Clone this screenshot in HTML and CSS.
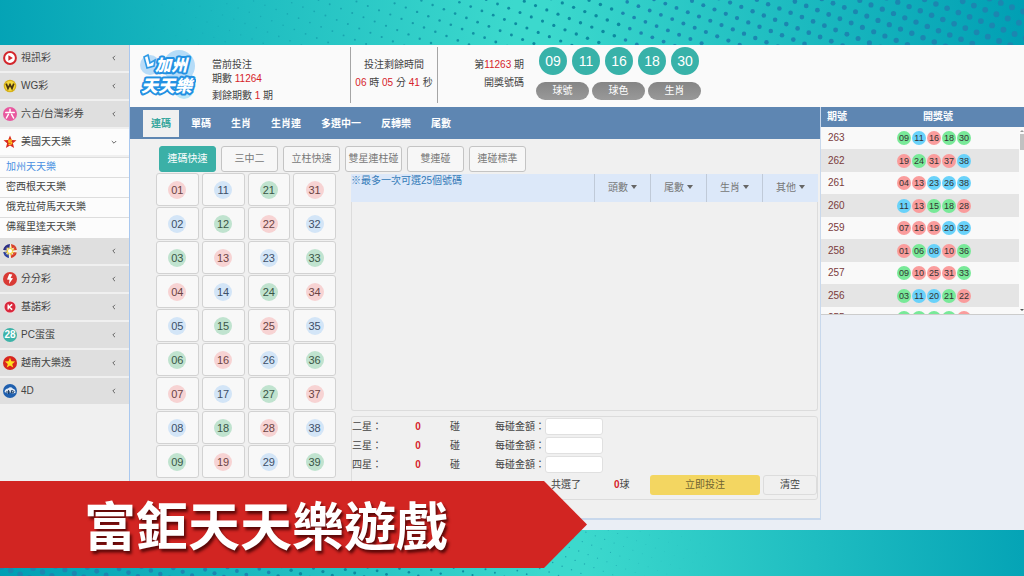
FILE: index.html
```html
<!DOCTYPE html>
<html lang="zh-Hant">
<head>
<meta charset="utf-8">
<meta name="viewport" content="width=device-width, initial-scale=1">
<title>富鉅天天樂遊戲</title>
<link rel="stylesheet" href="styles.css">
</head>
<body>
<div class="stage">
<svg class="dots" id="dots" viewBox="0 0 1024 576" preserveAspectRatio="none" aria-hidden="true"></svg>
<div class="app">
  <nav class="sidebar" aria-label="彩種">
    <button class="menu"><svg class="icon" viewBox="0 0 14 14"><circle cx="7" cy="7" r="5.9" fill="#fff" stroke="#d3262c" stroke-width="2"/><path d="M5.4 4.2 9.8 7 5.4 9.8z" fill="#d3262c"/></svg><span>視訊彩</span><svg class="chev" viewBox="0 0 6 6"><path d="M4 .8 1.8 3 4 5.2"/></svg></button>
    <button class="menu"><svg class="icon" viewBox="0 0 14 14"><circle cx="7" cy="7" r="6.3" fill="#d8b21c"/><circle cx="7" cy="7" r="5" fill="#f4d93c"/><path d="M3.2 4.6 5 9.4 7 5.6 9 9.4 10.8 4.6" fill="none" stroke="#4a3510" stroke-width="1.7"/></svg><span>WG彩</span><svg class="chev" viewBox="0 0 6 6"><path d="M4 .8 1.8 3 4 5.2"/></svg></button>
    <button class="menu"><svg class="icon" viewBox="0 0 14 14"><circle cx="7" cy="7" r="7" fill="#e8589f"/><path d="M7 2.2V4.6M2.8 5.5H11.2M5.4 7.4 3.4 11M8.6 7.4 10.6 11" fill="none" stroke="#fff" stroke-width="1.5" stroke-linecap="round"/></svg><span>六合/台灣彩券</span><svg class="chev" viewBox="0 0 6 6"><path d="M4 .8 1.8 3 4 5.2"/></svg></button>
    <button class="menu menu-open"><svg class="icon" viewBox="0 0 14 14"><path d="M7 .6 8.8 4.9 13.5 5.2 9.9 8.2 11.1 12.9 7 10.4 2.9 12.9 4.1 8.2.5 5.2 5.2 4.9z" fill="#d8281f"/><path d="M9 5.1H5.9V7H7.7Q9 7.2 8.8 8.4 8.5 9.5 5.5 9.2" fill="none" stroke="#ffd21f" stroke-width="1.3"/></svg><span>美國天天樂</span><svg class="chev" viewBox="0 0 6 6"><path d="M.8 2 3 4.2 5.2 2"/></svg></button>
    <div class="submenu">
      <a class="sub sub-active" href="#">加州天天樂</a>
      <a class="sub" href="#">密西根天天樂</a>
      <a class="sub" href="#">俄克拉荷馬天天樂</a>
      <a class="sub" href="#">佛羅里達天天樂</a>
    </div>
    <button class="menu"><svg class="icon" viewBox="0 0 14 14"><circle cx="7" cy="7" r="7" fill="#f4f0e0"/><path d="M7 0A7 7 0 0 0 .1 6L4.5 6.5 3.2 3.5 6.2 5z" fill="#2a2d86"/><path d="M.2 8A7 7 0 0 0 6 13.9L5.6 9.4 2.6 10.6 4.6 7.6z" fill="#2b3fa0"/><path d="M8 13.9A7 7 0 0 0 13.8 8.4L9.4 8 10.4 11 7.6 9.4z" fill="#d63a2c"/><path d="M13.9 6A7 7 0 0 0 8 .1L8.6 4.6 11.4 3.4 9.4 6.4z" fill="#d8402c"/><path d="M2 4.5 5 6 4.5 2.8 7 5 8.6 2 8.8 5.4 12 4.8 9.4 7.2 12 9.4 8.8 8.8 8.6 12 6.6 9.2 4.2 11.6 4.8 8.4 1.6 8.4 4.4 6.8z" fill="#f2d335"/><circle cx="7" cy="7" r="2" fill="#fff"/></svg><span>菲律賓樂透</span><svg class="chev" viewBox="0 0 6 6"><path d="M4 .8 1.8 3 4 5.2"/></svg></button>
    <button class="menu"><svg class="icon" viewBox="0 0 14 14"><circle cx="7" cy="7" r="7" fill="#d93a35"/><path d="M6.2 2 4 7.4 6.5 7.7 6 12 10 6.3 7.6 6 9.3 2.4z" fill="#fff"/></svg><span>分分彩</span><svg class="chev" viewBox="0 0 6 6"><path d="M4 .8 1.8 3 4 5.2"/></svg></button>
    <button class="menu"><svg class="icon" viewBox="0 0 14 14"><circle cx="7" cy="7" r="6.5" fill="#f3d9dc"/><circle cx="7" cy="7" r="5.5" fill="#d9283c"/><path d="M5.2 4.4V9.6M9.2 4.4 6 7 9.2 9.6" fill="none" stroke="#fff" stroke-width="1.4"/></svg><span>基諾彩</span><svg class="chev" viewBox="0 0 6 6"><path d="M4 .8 1.8 3 4 5.2"/></svg></button>
    <button class="menu"><span class="icon icon-28">28</span><span>PC蛋蛋</span><svg class="chev" viewBox="0 0 6 6"><path d="M4 .8 1.8 3 4 5.2"/></svg></button>
    <button class="menu"><svg class="icon" viewBox="0 0 14 14"><circle cx="7" cy="7" r="7" fill="#d8261f"/><path d="M7 1.8 8.4 5.3 12.1 5.5 9.2 7.9 10.2 11.5 7 9.5 3.8 11.5 4.8 7.9 1.9 5.5 5.6 5.3z" fill="#ffe11f"/></svg><span>越南大樂透</span><svg class="chev" viewBox="0 0 6 6"><path d="M4 .8 1.8 3 4 5.2"/></svg></button>
    <button class="menu"><svg class="icon" viewBox="0 0 14 14"><circle cx="7" cy="7" r="7" fill="#1f5fae"/><path d="M1.5 8Q2 4.5 5 4.5 7.5 2 10 4.8 13 5.5 12.4 9L9 9.6 7 8.2 5 9.6z" fill="#dfe9f4"/><path d="M3 8H7M5.6 6V10M8.4 6.6V9Q11 9 11 7.8 11 6.6 8.4 6.6" fill="none" stroke="#16375f" stroke-width="1"/></svg><span>4D</span><svg class="chev" viewBox="0 0 6 6"><path d="M4 .8 1.8 3 4 5.2"/></svg></button>
  </nav>

  <div class="content">
    <header class="topbar">
      <svg class="logo" viewBox="0 0 56 52" role="img" aria-label="加州天天樂">
        <circle cx="10" cy="16" r="10" fill="#b9dcf8"/><circle cx="39" cy="17" r="16" fill="#b5dcf8"/><circle cx="44" cy="40" r="10" fill="#b9e6f8"/><circle cx="44" cy="40" r="6" fill="#e4f5fc"/>
        <path d="M4 8 8 6 10 14 15 11 14 17 7 19z" fill="#fff" stroke="#2f9be6" stroke-width="1.6"/>
        <text class="logo-text" x="15" y="22" font-size="16">加州</text>
        <text class="logo-text" x="1" y="43" font-size="17">天天樂</text>
      </svg>
      <div class="issue"><p>當前投注</p><p>期數 <em>11264</em></p><p class="issue-left">剩餘期數 <em>1</em> 期</p></div>
      <div class="timer"><p>投注剩餘時間</p><p><em>06</em> 時 <em>05</em> 分 <em>41</em> 秒</p></div>
      <div class="last"><p>第<em>11263</em> 期</p><p>開獎號碼</p></div>
      <div class="result">
        <div class="result-balls"><span>09</span><span>11</span><span>16</span><span>18</span><span>30</span></div>
        <div class="result-tabs"><button>球號</button><button>球色</button><button>生肖</button></div>
      </div>
    </header>

    <div class="columns">
      <main class="play">
        <nav class="tabs" aria-label="玩法">
          <a class="tab tab-active" href="#">連碼</a><a class="tab" href="#">單碼</a><a class="tab" href="#">生肖</a><a class="tab" href="#">生肖連</a><a class="tab" href="#">多選中一</a><a class="tab" href="#">反轉樂</a><a class="tab" href="#">尾數</a>
        </nav>
        <div class="modes">
          <button class="mode mode-active">連碼快速</button><button class="mode">三中二</button><button class="mode">立柱快速</button><button class="mode">雙星連柱碰</button><button class="mode">雙連碰</button><button class="mode">連碰標準</button>
        </div>
        <div class="board">
          <div class="numbers">
            <button class="cell r"><span>01</span></button><button class="cell b"><span>11</span></button><button class="cell g"><span>21</span></button><button class="cell r"><span>31</span></button>
            <button class="cell b"><span>02</span></button><button class="cell g"><span>12</span></button><button class="cell r"><span>22</span></button><button class="cell b"><span>32</span></button>
            <button class="cell g"><span>03</span></button><button class="cell r"><span>13</span></button><button class="cell b"><span>23</span></button><button class="cell g"><span>33</span></button>
            <button class="cell r"><span>04</span></button><button class="cell b"><span>14</span></button><button class="cell g"><span>24</span></button><button class="cell r"><span>34</span></button>
            <button class="cell b"><span>05</span></button><button class="cell g"><span>15</span></button><button class="cell r"><span>25</span></button><button class="cell b"><span>35</span></button>
            <button class="cell g"><span>06</span></button><button class="cell r"><span>16</span></button><button class="cell b"><span>26</span></button><button class="cell g"><span>36</span></button>
            <button class="cell r"><span>07</span></button><button class="cell b"><span>17</span></button><button class="cell g"><span>27</span></button><button class="cell r"><span>37</span></button>
            <button class="cell b"><span>08</span></button><button class="cell g"><span>18</span></button><button class="cell r"><span>28</span></button><button class="cell b"><span>38</span></button>
            <button class="cell g"><span>09</span></button><button class="cell r"><span>19</span></button><button class="cell b"><span>29</span></button><button class="cell g"><span>39</span></button>
          </div>
          <div class="slip">
            <div class="filters">
              <p class="hint">※最多一次可選25個號碼</p>
              <button class="filter">頭數</button><button class="filter">尾數</button><button class="filter">生肖</button><button class="filter">其他</button>
            </div>
            <div class="picked"></div>
            <form class="bet">
              <div class="bet-row"><span>二星：</span><b>0</b><span>碰</span><label for="star2">每碰金額：</label><input id="star2" type="text"></div>
              <div class="bet-row"><span>三星：</span><b>0</b><span>碰</span><label for="star3">每碰金額：</label><input id="star3" type="text"></div>
              <div class="bet-row"><span>四星：</span><b>0</b><span>碰</span><label for="star4">每碰金額：</label><input id="star4" type="text"></div>
              <div class="bet-foot"><span class="total">共選了</span><span class="count"><b>0</b>球</span><button class="submit" type="button">立即投注</button><button class="clear" type="reset">清空</button></div>
            </form>
          </div>
        </div>
      </main>

      <aside class="history">
        <div class="history-head"><span>期號</span><span>開獎號</span></div>
        <div class="history-body">
          <table class="draws">
            <tr><th scope="row">263</th><td><i class="g">09</i><i class="b">11</i><i class="r">16</i><i class="g">18</i><i class="g">30</i></td></tr>
            <tr><th scope="row">262</th><td><i class="r">19</i><i class="g">24</i><i class="r">31</i><i class="r">37</i><i class="b">38</i></td></tr>
            <tr><th scope="row">261</th><td><i class="r">04</i><i class="r">13</i><i class="b">23</i><i class="b">26</i><i class="b">38</i></td></tr>
            <tr><th scope="row">260</th><td><i class="b">11</i><i class="r">13</i><i class="g">15</i><i class="g">18</i><i class="r">28</i></td></tr>
            <tr><th scope="row">259</th><td><i class="r">07</i><i class="r">16</i><i class="r">19</i><i class="b">20</i><i class="b">32</i></td></tr>
            <tr><th scope="row">258</th><td><i class="r">01</i><i class="g">06</i><i class="b">08</i><i class="r">10</i><i class="g">36</i></td></tr>
            <tr><th scope="row">257</th><td><i class="g">09</i><i class="r">10</i><i class="r">25</i><i class="r">31</i><i class="g">33</i></td></tr>
            <tr><th scope="row">256</th><td><i class="g">03</i><i class="b">11</i><i class="b">20</i><i class="g">21</i><i class="r">22</i></td></tr>
            <tr><th scope="row">255</th><td><i class="g">11</i><i class="g">11</i><i class="g">15</i><i class="g">21</i><i class="r">24</i></td></tr>
          </table>
          <div class="scroll"><span class="up"></span><span class="thumb"></span><span class="down"></span></div>
        </div>
      </aside>
    </div>
  </div>
</div>
<div class="banner"><h1>富鉅天天樂遊戲</h1></div>
</div>
<script src="dots.js"></script>
</body>
</html>
```
FILE: styles.css
```css
* { box-sizing: border-box; }
body, p, h1 { margin: 0; }
body, button, input {
  font-family: "Liberation Sans", "Noto Sans CJK TC", sans-serif;
  font-size: 10px;
  line-height: 14px;
  color: #444;
}
button { padding: 0; border: 0; background: none; }
a { text-decoration: none; }
em, b { font-style: normal; color: #d6232b; }

.stage {
  position: relative;
  display: grid;
  grid-template-rows: 45px minmax(0, 1fr) 46px;
  height: 100vh;
  overflow: hidden;
  background: linear-gradient(86deg, #009fb4 0%, #3cd9cd 52%, #3cd9cd 55%, #009fb4 100%);
}
.dots { position: absolute; inset: 0; width: 100%; height: 100%; }
.app {
  position: relative;
  grid-row: 2;
  display: grid;
  grid-template-columns: 130px minmax(0, 1fr);
  overflow: hidden;
  background: #eaeef5;
}

/* Sidebar */
.sidebar { background: #f0f0f0; border-right: 1px solid #a9c8ef; }
.menu {
  display: flex;
  align-items: center;
  gap: 4px;
  width: 100%;
  height: 28px;
  padding: 0 12px 0 3px;
  background: #dfdfdf;
  border-bottom: 2px solid #f0f0f0;
}
.menu-open { background: #fcfcfc; }
.icon { width: 14px; height: 14px; flex: none; }
.icon-28 {
  border-radius: 50%;
  background: #3db3a8;
  color: #fff;
  font-weight: bold;
}
.chev { width: 6px; height: 6px; margin-left: auto; fill: none; stroke: #666; stroke-width: 1; }
.submenu { padding-bottom: 1px; background: #fcfcfc; }
.sub {
  display: block;
  height: 20px;
  padding-left: 6px;
  line-height: 18px;
  border-top: 1px solid #ddd;
  color: #444;
}
.sub-active { color: #4a90e2; }

/* Header */
.content { display: flex; flex-direction: column; min-width: 0; }
.topbar { display: flex; height: 62px; flex: none; background: #fafafa; }
.logo { width: 56px; height: 52px; margin: 4px 16px 0 10px; }
.logo-text {
  font-family: "Noto Sans CJK TC", sans-serif;
  font-weight: 900;
  font-style: italic;
  fill: #fff;
  stroke: #2391e2;
  stroke-width: 4px;
  stroke-linejoin: round;
  paint-order: stroke;
}
.issue { width: 138px; padding-top: 13px; }
.issue-left { padding-top: 3px; }
.timer {
  width: 88px;
  margin: 2px 0 4px;
  padding-top: 9px;
  border: solid #a5a5a5;
  border-width: 0 1px;
  text-align: center;
}
.last { width: 86px; padding-top: 11px; text-align: right; }
.timer p, .last p { line-height: 18px; }
.result { margin: 2px 0 0 12px; }
.result-balls { display: flex; gap: 5px; margin: 0 3px 7px; }
.result-balls span {
  width: 28px;
  height: 28px;
  border-radius: 50%;
  background: #38b2a9;
  color: #fff;
  font-size: 14px;
  line-height: 28px;
  text-align: center;
}
.result-tabs { display: flex; gap: 3px; }
.result-tabs button {
  width: 53px;
  height: 18px;
  border-radius: 9px;
  background: linear-gradient(#858585, #999);
  color: #fff;
}

/* Play area */
.columns { display: grid; grid-template-columns: minmax(0, 1fr) 203px; align-items: start; }
.play {
  background: #f0f0f0;
  border: solid #c8d8ec;
  border-width: 0 1px 2px 0;
  padding-bottom: 18px;
}
.tabs { display: flex; gap: 4px; padding: 3px 13px 2px; background: #5e86b2; }
.tab { padding: 0 8px; line-height: 27px; font-weight: bold; color: #fff; }
.tab-active { background: #f0f0f0; color: #38a79e; }
.modes { display: flex; gap: 5px; padding: 7px 29px 1px; }
.mode {
  width: 57px;
  height: 26px;
  border: 1px solid #c4c4c4;
  border-radius: 3px;
  background: #f7f7f7;
  color: #777;
}
.mode-active { background: #3bb0a7; border-color: #3bb0a7; color: #fff; }
.board { display: grid; grid-template-columns: 180px minmax(0, 1fr); gap: 15px; padding: 0 2px 0 26px; align-items: start; }
.numbers { display: grid; grid-template-columns: repeat(4, 1fr); gap: 1px 3px; }
.cell {
  display: grid;
  place-items: center;
  height: 33px;
  border: 1px solid #d2d2d2;
  border-radius: 3px;
  background: #f8f8f8;
}
.cell span { width: 18px; height: 18px; border-radius: 50%; font-size: 11px; line-height: 18px; }
.cell.r span { background: #f7d3d3; color: #6b4444; }
.cell.b span { background: #d3e5f7; color: #3e5068; }
.cell.g span { background: #c0e3cf; color: #3a5646; }
.filters { display: flex; margin-top: 1px; background: #dce8f9; }
.hint { flex: 1; color: #337ab7; }
.filter {
  width: 56px;
  height: 28px;
  border-left: 1px solid #c0cad8;
  color: #777;
}
.filter::after {
  content: "";
  display: inline-block;
  margin-left: 3px;
  vertical-align: 2px;
  border: 3px solid transparent;
  border-top: 4px solid #666;
  border-bottom: 0;
}
.picked { height: 209px; border: 1px solid #dcdcdc; border-top: 0; border-radius: 0 0 3px 3px; }
.bet { margin-top: 5px; border: 1px solid #dcdcdc; border-radius: 3px; padding-bottom: 4px; }
.bet-row { display: grid; grid-template-columns: 48px 36px 34px 75px 58px; align-items: center; height: 19px; }
.bet-row b { text-align: center; }
.bet-row span:nth-child(3) { text-align: right; padding-right: 10px; }
.bet-row label { text-align: right; }
.bet-row input {
  width: 58px;
  height: 17px;
  padding: 0 4px;
  border: 1px solid #e0e0e0;
  border-radius: 3px;
  background: #fff;
}
.bet-foot { display: flex; align-items: center; gap: 3px; margin-top: 1px; }
.total { margin-left: auto; width: 60px; }
.count { width: 33px; }
.submit { width: 110px; height: 20px; border-radius: 3px; background: #f3d661; color: #6f6432; }
.clear { width: 54px; height: 20px; border: 1px solid #dcdcdc; border-radius: 3px; }

/* History */
.history { border-bottom: 1px solid #ccc; }
.history-head {
  display: grid;
  grid-template-columns: 30px 1fr;
  height: 20px;
  padding-left: 6px;
  background: #5e86b2;
  color: #fff;
  font-weight: bold;
  line-height: 20px;
}
.history-head span:last-child { padding-left: 66px; }
.history-body { display: flex; height: 187px; overflow: hidden; background: #fafafa; }
.draws { flex: 1; border-collapse: collapse; align-self: flex-start; }
.draws th, .draws td { height: 22px; padding: 0; background: #f9f9f9; }
.draws tr:nth-child(even) > * { height: 23px; background: #e5e5e5; }
.draws th { width: 76px; padding-left: 7px; text-align: left; font-weight: normal; color: #7a3b3b; }
.draws td { font-size: 0; }
.draws i {
  display: inline-block;
  width: 14px;
  height: 14px;
  margin-right: 1px;
  border-radius: 50%;
  font-size: 9px;
  font-style: normal;
  line-height: 14px;
  text-align: center;
  vertical-align: middle;
  color: #333;
}
.draws .r { background: #fa9c9c; }
.draws .g { background: #78e998; }
.draws .b { background: #69d2fa; }
.scroll { display: flex; flex-direction: column; align-items: flex-end; width: 5px; padding: 3px 0; }
.up, .down { border: 2px solid transparent; }
.up { border-top: 0; border-bottom-color: #999; }
.down { border-bottom: 0; border-top-color: #555; margin-top: auto; }
.thumb { width: 4px; height: 16px; margin-top: 2px; background: #c1c1c1; }

/* Title banner */
.banner {
  position: absolute;
  left: 0;
  bottom: 8px;
  padding: 0 139px 2px 84px;
  background: #d22522;
  clip-path: polygon(0 0, calc(100% - 43px) 0, 100% 50%, calc(100% - 43px) 100%, 0 100%);
}
.banner h1 {
  font-family: "Noto Sans CJK TC", sans-serif;
  font-size: 52px;
  font-weight: bold;
  line-height: 85px;
  white-space: nowrap;
  color: #fff;
  text-shadow: 2px 3px 3px #5a0808;
}
```
FILE: dots.js
```js
// Halftone dots: two rotated square lattices that fade across the strips.
const svg = document.getElementById("dots");

function lattice(x0, y0, ax, ay, top, bottom, size, alpha) {
  for (let i = -110; i < 110; i++) {
    for (let j = -80; j < 80; j++) {
      const x = x0 + i * ax - j * ay;
      const y = y0 + i * ay + j * ax;
      if (x < -4 || x > 1028 || y < top || y > bottom) continue;
      const r = size(x);
      const a = alpha(x);
      if (r <= 0 || a <= 0) continue;
      const c = document.createElementNS("http://www.w3.org/2000/svg", "circle");
      c.setAttribute("cx", x.toFixed(1));
      c.setAttribute("cy", y.toFixed(1));
      c.setAttribute("r", r.toFixed(2));
      c.setAttribute("fill", r > 1.8 ? "#1c86b0" : "#0d8aa0");
      c.setAttribute("opacity", Math.min(1, a).toFixed(2));
      svg.appendChild(c);
    }
  }
}

lattice(524.3, 1.3, 11.25, 4.3, -4, 49, x => 0.3 + (x - 120) * 0.003, x => (x - 120) / 400);
lattice(578.7, 551, 9.4, 3.6, 526, 580, x => 2.8 - x * 0.0037, x => (750 - x) / 280);
```
